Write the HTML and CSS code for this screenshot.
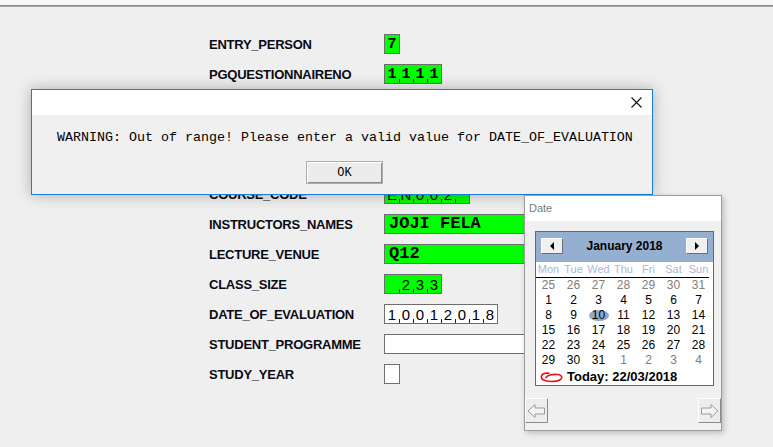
FILE: index.html
```html
<!DOCTYPE html>
<html>
<head>
<meta charset="utf-8">
<link rel="stylesheet" href="styles.css">
</head>
<body>
<div class="topbar"></div>
<main class="form">
  <span class="label">ENTRY_PERSON</span>
  <span class="field green comb mono"><span class="cell">7</span></span>

  <span class="label">PGQUESTIONNAIRENO</span>
  <span class="field green comb mono"><span class="cell">1</span><span class="cell">1</span><span class="cell">1</span><span class="cell">1</span></span>

  <span class="label"></span>
  <span class="field green text mono"></span>

  <span class="label"></span>
  <span class="field green comb"><span class="cell"></span><span class="cell"></span><span class="cell"></span><span class="cell"></span></span>

  <span class="label"></span>
  <span class="field green comb"><span class="cell"></span></span>

  <span class="label">COURSE_CODE</span>
  <span class="field green comb"><span class="cell">E</span><span class="cell">N</span><span class="cell">0</span><span class="cell">0</span><span class="cell">2</span><span class="cell"></span></span>

  <span class="label">INSTRUCTORS_NAMES</span>
  <span class="field green text mono">JOJI FELA</span>

  <span class="label">LECTURE_VENUE</span>
  <span class="field green text mono">Q12</span>

  <span class="label">CLASS_SIZE</span>
  <span class="field green comb"><span class="cell"></span><span class="cell">2</span><span class="cell">3</span><span class="cell">3</span></span>

  <span class="label">DATE_OF_EVALUATION</span>
  <span class="field comb"><span class="cell">1</span><span class="cell">0</span><span class="cell">0</span><span class="cell">1</span><span class="cell">2</span><span class="cell">0</span><span class="cell">1</span><span class="cell">8</span></span>

  <span class="label">STUDENT_PROGRAMME</span>
  <span class="field text"></span>

  <span class="label">STUDY_YEAR</span>
  <span class="field comb"><span class="cell"></span></span>
</main>

<div class="dialog">
  <div class="dlg-title">
    <svg class="dlg-close" width="11" height="11" viewBox="0 0 11 11"><path d="M0.5 0.5 L10.5 10.5 M10.5 0.5 L0.5 10.5" stroke="#111" stroke-width="1.1" fill="none"/></svg>
  </div>
  <div class="dlg-msg">WARNING: Out of range! Please enter a valid value for DATE_OF_EVALUATION</div>
  <div class="dlg-actions"><button class="btn-ok">OK</button></div>
</div>

<div class="datepop">
  <div class="pop-title">Date</div>
  <div class="pop-body">
    <div class="calendar">
      <div class="cal-head">
        <span class="nav-btn"><svg width="5" height="8" viewBox="0 0 5 8"><path d="M4 0 L0 4 L4 8 Z" fill="#000"/></svg></span>
        <span class="month">January 2018</span>
        <span class="nav-btn"><svg width="5" height="8" viewBox="0 0 5 8"><path d="M0 0 L4 4 L0 8 Z" fill="#000"/></svg></span>
      </div>
      <div class="weekdays">
        <span>Mon</span><span>Tue</span><span>Wed</span><span>Thu</span><span>Fri</span><span>Sat</span><span>Sun</span>
      </div>
      <div class="days">
        <span class="other">25</span><span class="other">26</span><span class="other">27</span><span class="other">28</span><span class="other">29</span><span class="other">30</span><span class="other">31</span>
        <span>1</span><span>2</span><span>3</span><span>4</span><span>5</span><span>6</span><span>7</span>
        <span>8</span><span>9</span><span><b class="sel">10</b></span><span>11</span><span>12</span><span>13</span><span>14</span>
        <span>15</span><span>16</span><span>17</span><span>18</span><span>19</span><span>20</span><span>21</span>
        <span>22</span><span>23</span><span>24</span><span>25</span><span>26</span><span>27</span><span>28</span>
        <span>29</span><span>30</span><span>31</span><span class="other">1</span><span class="other">2</span><span class="other">3</span><span class="other">4</span>
      </div>
      <div class="today">
        <svg width="23" height="12" viewBox="0 0 23 12"><path d="M9 2.2 C4 1.6 1 3.6 1.3 6.4 C1.7 9.6 8 10.8 14 10.4 C19.5 10 22.4 8 21.6 5.6 C20.8 3.4 15.5 3 11.5 3.8 C9 4.3 6.5 5.4 6 6.6" stroke="#e8141b" stroke-width="1.6" fill="none" stroke-linecap="round"/></svg>
        <span>Today: 22/03/2018</span>
      </div>
    </div>
    <div class="pop-nav">
      <span class="arrow-btn"><svg width="19" height="16" viewBox="0 0 19 16"><path d="M1 8 L8 1.5 L8 5 L17.5 5 L17.5 11 L8 11 L8 14.5 Z" fill="#f4f4f4" stroke="#9a9a9a" stroke-width="1"/></svg></span>
      <span class="arrow-btn"><svg width="19" height="16" viewBox="0 0 19 16"><path d="M18 8 L11 1.5 L11 5 L1.5 5 L1.5 11 L11 11 L11 14.5 Z" fill="#f4f4f4" stroke="#9a9a9a" stroke-width="1"/></svg></span>
    </div>
  </div>
</div>
</body>
</html>
```

FILE: styles.css
```css
* { box-sizing: border-box; }

body {
  margin: 0;
  width: 773px;
  height: 447px;
  overflow: hidden;
  position: relative;
  background: #efefef;
  font-family: "Liberation Sans", Arial, sans-serif;
  color: #000;
}

.topbar {
  height: 6px;
  background: #f7f7f7;
  border-bottom: 1px solid #858585;
  box-shadow: 0 1px 0 #a9a9a9;
}

.form {
  display: grid;
  grid-template-columns: 175px auto;
  grid-auto-rows: 20px;
  row-gap: 10px;
  padding: 28px 0 0 209px;
  align-items: center;
  justify-items: start;
}

.label {
  font-weight: bold;
  font-size: 13px;
  letter-spacing: -0.25px;
  color: #0a0a14;
  padding-top: 1px;
}

.field {
  height: 20px;
  border: 1px solid #6e6e6e;
  background: #fff;
}

.green { background: #00ff00; }

.comb { display: flex; }

.cell {
  width: 14px;
  height: 18px;
  position: relative;
  text-align: center;
  line-height: 19px;
  font-size: 15px;
}

.cell + .cell::before {
  content: "";
  position: absolute;
  left: 0;
  bottom: 0;
  width: 1px;
  height: 4px;
  background: #222;
}

.mono {
  font-family: "Liberation Mono", "Courier New", monospace;
  font-weight: bold;
  font-size: 17px;
}

.text {
  width: 200px;
  padding-left: 4px;
  line-height: 18px;
  white-space: pre;
}

/* warning dialog */
.dialog {
  position: absolute;
  left: 31px;
  top: 89px;
  width: 622px;
  height: 106px;
  border: 1px solid #1a7fd4;
  background: #f0f0f0;
  box-shadow: 0 0 14px rgba(0, 0, 0, 0.28);
  display: flex;
  flex-direction: column;
}

.dlg-title {
  height: 25px;
  background: #fff;
  display: flex;
  justify-content: flex-end;
  align-items: center;
  padding-right: 10px;
}

.dlg-msg {
  font-family: "Liberation Mono", "Courier New", monospace;
  font-size: 13.33px;
  line-height: 16px;
  padding: 15px 0 0 25px;
  white-space: pre;
}

.dlg-actions {
  padding: 15px 0 0 274px;
}

.btn-ok {
  width: 77px;
  height: 23px;
  margin: 0;
  padding: 0;
  background: #ececec;
  border: 1px solid #adadad;
  box-shadow: inset 1px 1px 0 #fff, inset -1px -1px 0 #8c8c8c;
  font-family: "Liberation Mono", "Courier New", monospace;
  font-size: 12px;
  color: #000;
}

/* date popup */
.datepop {
  position: absolute;
  left: 524px;
  top: 195px;
  width: 198px;
  height: 236px;
  border: 1px solid #9c9c9c;
  background: #f0f0f0;
  box-shadow: 2px 2px 6px rgba(0, 0, 0, 0.22);
}

.pop-title {
  height: 25px;
  background: #fff;
  font-size: 11px;
  line-height: 25px;
  color: #7a7a7a;
  padding-left: 4px;
}

.pop-body {
  padding: 10px 0 0 10px;
}

.calendar {
  width: 179px;
  height: 155px;
  border: 1px solid #666;
  background: #fff;
}

.cal-head {
  height: 30px;
  background: #95afd0;
  display: flex;
  align-items: flex-start;
  justify-content: space-between;
  padding: 6px 5px 0 5px;
}

.nav-btn {
  width: 22px;
  height: 16px;
  background: #f0f0f0;
  border: 1px solid;
  border-color: #fff #6e6e6e #6e6e6e #fff;
  display: flex;
  align-items: center;
  justify-content: center;
}

.month {
  font-weight: bold;
  font-size: 12px;
  line-height: 16px;
  color: #000;
}

.weekdays {
  display: grid;
  grid-template-columns: repeat(7, 25px);
  height: 16px;
  margin: 0 4px 0 0;
  border-bottom: 1px solid #000;
  font-size: 11px;
  line-height: 15px;
  color: #a6b8d8;
  text-align: center;
}

.days {
  display: grid;
  grid-template-columns: repeat(7, 25px);
  grid-auto-rows: 15px;
  font-size: 12px;
  line-height: 15px;
  text-align: center;
  color: #000;
}

.days .other { color: #857b7b; }

.sel {
  font-weight: normal;
  display: inline-block;
  background: #8fa9cc;
  border-radius: 50%;
  width: 20px;
  height: 11px;
  line-height: 11px;
}

.today {
  height: 17px;
  display: flex;
  align-items: center;
  gap: 4px;
  padding-left: 4px;
  font-weight: bold;
  font-size: 13px;
}

.pop-nav {
  display: flex;
  justify-content: space-between;
  margin: 12px 0 0 -10px;
  width: 196px;
}

.arrow-btn {
  width: 23px;
  height: 25px;
  background: #ededed;
  border: 1px solid;
  border-color: #fff #8a8a8a #8a8a8a #fff;
  display: flex;
  align-items: center;
  justify-content: center;
}
```
